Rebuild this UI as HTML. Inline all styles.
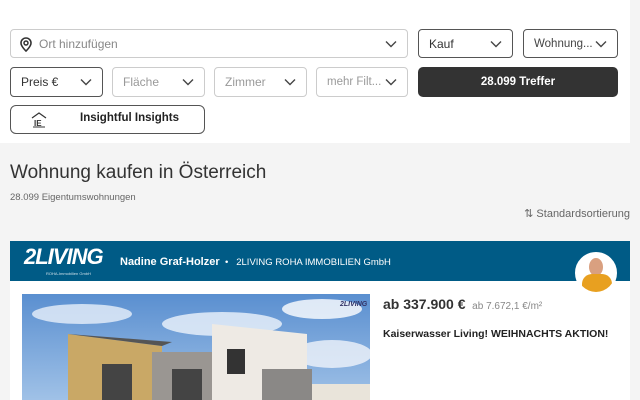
<!DOCTYPE html>
<html><head><meta charset="utf-8"><style>
*{box-sizing:border-box;margin:0;padding:0}
body{width:640px;height:400px;overflow:hidden;background:#f4f4f4;font-family:"Liberation Sans",sans-serif;color:#333;position:relative}
.top{position:absolute;left:0;top:0;width:630px;height:143px;background:#fff}
.f{position:absolute;border:1px solid #ccc;border-radius:4px;background:#fff;font-size:12px;color:#999;display:flex;align-items:center;padding-left:10px;padding-right:26px;white-space:nowrap;overflow:hidden}
.f.d{border-color:#555;color:#333}
.chev{position:absolute;right:10px;top:50%;margin-top:-4px}
.btn{position:absolute;left:418px;top:67px;width:200px;height:30px;background:#333;border-radius:5px;color:#fff;font-size:11.5px;font-weight:bold;display:flex;align-items:center;justify-content:center}
.ins{position:absolute;left:10px;top:105px;width:195px;height:29px;border:1px solid #555;border-radius:6px;font-size:11.5px;font-weight:bold;color:#222}
h1{position:absolute;left:10px;top:162px;font-size:19px;font-weight:normal;color:#333}
.cnt{position:absolute;left:10px;top:192px;font-size:9.5px;color:#666}
.sort{position:absolute;right:10px;top:207px;font-size:11px;color:#666}
.card{position:absolute;left:10px;top:241px;width:620px;height:159px;background:#fff;overflow:hidden}
.bar{height:40px;background:#005b86;color:#fff;position:relative}
</style></head><body>
<div class="top">
 <div class="f" style="left:10px;top:29px;width:398px;height:29px;padding-left:28px;color:#888">
  <svg style="position:absolute;left:9px;top:7px" width="12" height="15" viewBox="0 0 12 15"><path d="M6 1a5 5 0 0 0-5 5c0 3.5 5 8 5 8s5-4.5 5-8a5 5 0 0 0-5-5z" fill="none" stroke="#333" stroke-width="1.6"/><circle cx="6" cy="6" r="2" fill="none" stroke="#333" stroke-width="1.5"/></svg>
  Ort hinzufügen<svg class="chev" width="12" height="8"><path d="M1 1.5l5 5 5-5" fill="none" stroke="#444" stroke-width="1.4"/></svg></div>
 <div class="f d" style="left:418px;top:29px;width:95px;height:29px">Kauf<svg class="chev" width="12" height="8"><path d="M1 1.5l5 5 5-5" fill="none" stroke="#444" stroke-width="1.4"/></svg></div>
 <div class="f d" style="left:523px;top:29px;width:95px;height:29px;color:#444;font-size:11.5px">Wohnung...<svg class="chev" width="12" height="8"><path d="M1 1.5l5 5 5-5" fill="none" stroke="#444" stroke-width="1.4"/></svg></div>
 <div class="f d" style="left:10px;top:67px;width:93px;height:30px">Preis €<svg class="chev" width="12" height="8"><path d="M1 1.5l5 5 5-5" fill="none" stroke="#444" stroke-width="1.4"/></svg></div>
 <div class="f" style="left:112px;top:67px;width:93px;height:30px">Fläche<svg class="chev" width="12" height="8"><path d="M1 1.5l5 5 5-5" fill="none" stroke="#444" stroke-width="1.4"/></svg></div>
 <div class="f" style="left:214px;top:67px;width:93px;height:30px">Zimmer<svg class="chev" width="12" height="8"><path d="M1 1.5l5 5 5-5" fill="none" stroke="#444" stroke-width="1.4"/></svg></div>
 <div class="f" style="left:316px;top:67px;width:92px;height:30px;font-size:11.5px">mehr Filt...<svg class="chev" width="12" height="8"><path d="M1 1.5l5 5 5-5" fill="none" stroke="#444" stroke-width="1.4"/></svg></div>
 <div class="btn">28.099 Treffer</div>
 <div class="ins"><svg style="position:absolute;left:20px;top:6px" width="16" height="16" viewBox="0 0 16 16"><path d="M1 6L8 1l7 5" fill="none" stroke="#333" stroke-width="1.2"/><text x="3" y="14" font-size="8" font-weight="bold" font-family="Liberation Sans" fill="#333">IE</text><path d="M2 15h12" stroke="#333"/></svg><span style="position:absolute;left:69px;top:6px">Insightful Insights</span></div>
</div>
<h1>Wohnung kaufen in Österreich</h1>
<div class="cnt">28.099 Eigentumswohnungen</div>
<div class="sort">⇅ Standardsortierung</div>
<div class="card">
 <div class="bar">
  <span style="position:absolute;left:14px;top:3px;font-size:22px;font-style:italic;font-weight:bold;letter-spacing:-1px">2LIVING</span>
  <span style="position:absolute;left:36px;top:30px;font-size:4px;opacity:.8">ROHA-Immobilien GmbH</span>
  <span style="position:absolute;left:110px;top:15px;font-size:11px;font-weight:bold">Nadine Graf-Holzer</span>
  <span style="position:absolute;left:215px;top:16px;font-size:9.5px">•&nbsp;&nbsp; 2LIVING ROHA IMMOBILIEN GmbH</span>
  <div style="position:absolute;left:565px;top:11px;width:42px;height:42px;border-radius:50%;background:#fff;overflow:hidden;border:2px solid #fff"><div style="position:absolute;left:12px;top:4px;width:14px;height:18px;border-radius:50%;background:#d9a080"></div><div style="position:absolute;left:5px;top:20px;width:30px;height:24px;border-radius:10px 10px 0 0;background:#e8a020"></div></div>
 </div>
 <svg style="position:absolute;left:12px;top:53px" width="348" height="120" viewBox="0 0 348 120">
  <defs><linearGradient id="s" x1="0" y1="0" x2="0" y2="1"><stop offset="0" stop-color="#5a8fd0"/><stop offset="1" stop-color="#a9c8ea"/></linearGradient></defs>
  <rect width="348" height="120" fill="url(#s)"/>
  <ellipse cx="60" cy="20" rx="50" ry="10" fill="#e8f0fa" opacity=".8"/><ellipse cx="200" cy="30" rx="60" ry="12" fill="#eef4fb" opacity=".8"/><ellipse cx="300" cy="15" rx="40" ry="10" fill="#fff" opacity=".8"/><ellipse cx="310" cy="60" rx="40" ry="14" fill="#f0f4fa" opacity=".8"/>
  <polygon points="46,40 140,52 140,120 46,120" fill="#c9a866"/><polygon points="46,40 150,48 140,52" fill="#555"/>
  <rect x="130" y="58" width="70" height="62" fill="#9a9692"/>
  <polygon points="190,30 285,40 285,120 190,120" fill="#eeeae4"/>
  <rect x="240" y="75" width="50" height="45" fill="#8a8886"/>
  <rect x="80" y="70" width="30" height="40" fill="#444"/><rect x="150" y="75" width="30" height="40" fill="#444"/><rect x="205" y="55" width="18" height="25" fill="#333"/>
  <rect x="290" y="90" width="58" height="30" fill="#e9e4da"/>
  <text x="318" y="12" font-size="7" font-style="italic" font-weight="bold" fill="#336" font-family="Liberation Sans">2LIVING</text>
 </svg>
 <div style="position:absolute;left:373px;top:55px;font-size:14px;font-weight:bold;color:#333">ab 337.900 € <span style="font-size:10px;font-weight:normal;color:#888">&nbsp;ab 7.672,1 €/m²</span></div>
 <div style="position:absolute;left:373px;top:87px;font-size:10.5px;font-weight:bold;color:#222">Kaiserwasser Living! WEIHNACHTS AKTION!</div>
</div>
</body></html>
